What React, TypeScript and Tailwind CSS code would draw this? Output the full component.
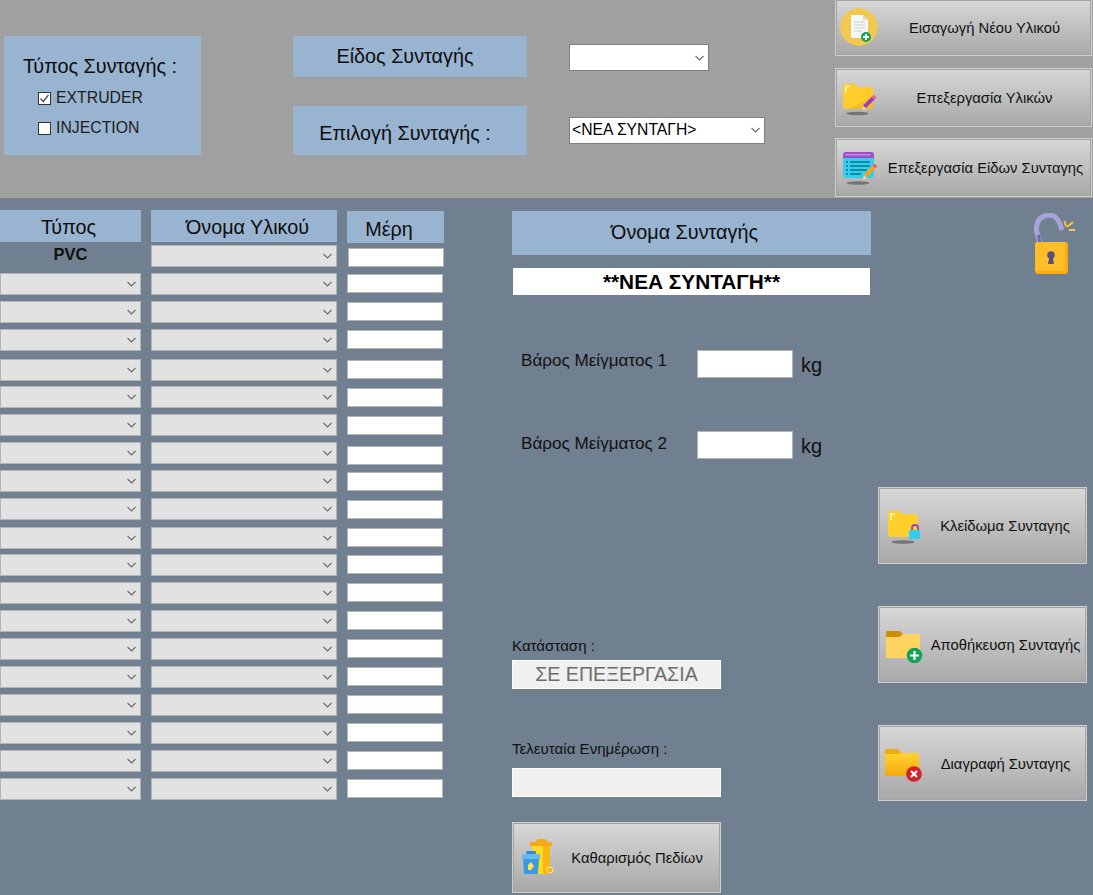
import type { ReactNode } from 'react'

const comboGaps = [
  'mt-[6px]', 'mt-[6px]', 'mt-[6px]', 'mt-[8px]', 'mt-[5px]', 'mt-[6px]', 'mt-[6px]', 'mt-[6px]', 'mt-[6px]', 'mt-[7px]',
  'mt-[5px]', 'mt-[6px]', 'mt-[6px]', 'mt-[6px]', 'mt-[6px]', 'mt-[6px]', 'mt-[6px]', 'mt-[6px]', 'mt-[6px]',
]

const partGaps = [
  'mt-[7px]', 'mt-[9px]', 'mt-[9px]', 'mt-[11px]', 'mt-[9px]', 'mt-[9px]', 'mt-[11px]', 'mt-[7px]', 'mt-[9px]', 'mt-[9px]',
  'mt-[8px]', 'mt-[9px]', 'mt-[9px]', 'mt-[9px]', 'mt-[9px]', 'mt-[9px]', 'mt-[9px]', 'mt-[9px]', 'mt-[9px]',
]

function Chevron() {
  return (
    <svg width="9" height="6" viewBox="0 0 9 6" fill="none" className="shrink-0">
      <path d="M0.5 1 L4.5 5 L8.5 1" stroke="#6b6b6b" strokeWidth="1.1" />
    </svg>
  )
}

function Combo({ className = '' }: { className?: string }) {
  return (
    <div className={`h-[22px] flex items-center justify-end pr-[4px] bg-[#e2e2e2] border border-[#b4b4b4] ${className}`}>
      <Chevron />
    </div>
  )
}

function PartInput({ className = '' }: { className?: string }) {
  return <div className={`h-[19px] w-[96px] bg-white border border-[#b4b4b4] ${className}`} />
}

function Caption({ className = '', children }: { className?: string; children: ReactNode }) {
  return (
    <div className={`flex items-center justify-center bg-[#99b4d1] text-[19.8px] text-[#0c0c0c] whitespace-nowrap ${className}`}>
      {children}
    </div>
  )
}

function Check({ checked, label }: { checked?: boolean; label: string }) {
  return (
    <div className="flex items-center h-[20px]">
      <div className="w-[13px] h-[13px] bg-white border border-[#333] flex items-center justify-center">
        {checked && (
          <svg width="11" height="11" viewBox="0 0 11 11" fill="none">
            <path d="M1.5 5.5 L4.2 8.5 L9.5 2" stroke="#444" strokeWidth="1.2" />
          </svg>
        )}
      </div>
      <span className="ml-[5px] text-[15.8px] text-[#1c1c1c]">{label}</span>
    </div>
  )
}

function ActionButton({
  icon,
  iconBox,
  label,
  className = '',
}: {
  icon: ReactNode
  iconBox: string
  label: string
  className?: string
}) {
  return (
    <div
      className={`flex items-center border border-[#cfcfcf] bg-linear-to-b from-[#d8d8d8] to-[#a8a8a8] shadow-[inset_0_0_0_1px_#a2a2a2] text-[14.8px] text-[#111] ${className}`}
    >
      <div className={`shrink-0 flex ${iconBox}`}>{icon}</div>
      <div className="flex-1 text-center whitespace-nowrap pt-[2px]">{label}</div>
    </div>
  )
}

function DocAddIcon() {
  return (
    <svg width="38" height="38" viewBox="0 0 38 38">
      <circle cx="19" cy="19" r="18.7" fill="#f2c94c" />
      <path d="M11 7 H23 L28 12 V30 H11 Z" fill="#f7f7f7" />
      <path d="M23 7 L28 12 H23 Z" fill="#d9d9d9" />
      <path d="M14 14 H25 M14 17 H25 M14 20 H25 M14 23 H22" stroke="#cfcfcf" strokeWidth="1" />
      <circle cx="26" cy="29" r="5" fill="#17a05d" />
      <path d="M26 26 V32 M23 29 H29" stroke="#fff" strokeWidth="1.8" />
    </svg>
  )
}

function Shadow({ cx = 15, cy = 31 }: { cx?: number; cy?: number }) {
  return <ellipse cx={cx} cy={cy} rx="11.5" ry="1.8" fill="#757575" />
}

function Pencil({ color }: { color: string }) {
  return (
    <g>
      <path d="M22 24 L31 15" stroke={color} strokeWidth="4" />
      <path d="M31 15 L33 13" stroke="#ef5d7a" strokeWidth="4" />
      <path d="M20 27.5 L20.6 23 L24 26.2 Z" fill="#f6d6a8" />
    </g>
  )
}

function FolderPencilIcon() {
  return (
    <svg width="36" height="34" viewBox="0 0 36 34">
      <Shadow />
      <path d="M0 3 Q0 0 3 0 H12 L15 4 H28 Q31 4 31 7 V23 Q31 26 28 26 H3 Q0 26 0 23 Z" fill="#ffcc29" />
      <path d="M2 2 H8 V4 H4 V9 H2 Z" fill="#fff0b0" />
      <path d="M6 26 H28 Q31 26 31 23 V14 Z" fill="#e9b41e" opacity="0.6" />
      <Pencil color="#9b3fc0" />
    </svg>
  )
}

function ListPencilIcon() {
  return (
    <svg width="36" height="34" viewBox="0 0 36 34">
      <Shadow />
      <path d="M0 10 V3 Q0 0 3 0 H28 Q31 0 31 3 V10 Z" fill="#9d4fc8" />
      <path d="M2 2 H28 V3.5 H2 Z" fill="#c78be0" />
      <path d="M0 6 H31 V23 Q31 26 28 26 H3 Q0 26 0 23 Z" fill="#35cdee" />
      <path d="M7 10 H27 M7 14 H27 M7 18 H24 M7 22 H18" stroke="#128aa8" strokeWidth="2" />
      <path d="M3 10 H5 M3 14 H5 M3 18 H5 M3 22 H5" stroke="#128aa8" strokeWidth="2" />
      <Pencil color="#f6a21e" />
    </svg>
  )
}

function FolderLockIcon() {
  return (
    <svg width="34" height="34" viewBox="0 0 34 34">
      <Shadow cx={15} cy={31} />
      <path d="M0 3 Q0 0 3 0 H11 L14 3 H27 Q30 3 30 6 V24 Q30 26 28 26 H3 Q0 26 0 23 Z" fill="#ffcf2b" />
      <path d="M2 2 H7 V4 H4 V9 H2 Z" fill="#fff0b0" />
      <path d="M24 20 V17 Q24 14 27 14 Q30 14 30 17 V20" fill="none" stroke="#9b3fc0" strokeWidth="1.8" />
      <rect x="21" y="19" width="11" height="9" rx="1" fill="#35cdee" />
    </svg>
  )
}

function FolderAddIcon() {
  return (
    <svg width="38" height="32" viewBox="0 0 38 32">
      <path d="M0 1 Q0 0 1 0 H14 L17 3 L14 7 H0 Z" fill="#c98f08" />
      <path d="M0 6 H13 L17 3 H34 V27 H0 Z" fill="#ffd35f" />
      <circle cx="28.5" cy="24.5" r="7.8" fill="#15a05a" />
      <path d="M28.5 20 V29 M24 24.5 H33" stroke="#fff" strokeWidth="2.2" />
    </svg>
  )
}

function FolderDeleteIcon() {
  return (
    <svg width="38" height="33" viewBox="0 0 38 33">
      <defs>
        <linearGradient id="folderRed" x1="0" y1="0" x2="0" y2="1">
          <stop offset="0" stopColor="#ffd42e" />
          <stop offset="1" stopColor="#f7a70f" />
        </linearGradient>
      </defs>
      <path d="M0 1 Q0 0 1 0 H13 L16 4 L13 6 H0 Z" fill="#eeaa10" />
      <path d="M0 5 H13 L16 4 H34 V27 H0 Z" fill="url(#folderRed)" />
      <circle cx="29" cy="25" r="7.8" fill="#d4202a" />
      <path d="M26 22 L32 28 M32 22 L26 28" stroke="#fff" strokeWidth="2.2" />
    </svg>
  )
}

function BinsIcon() {
  return (
    <svg width="32" height="38" viewBox="0 0 32 38">
      <path d="M14 3 Q14 0 17 0 H22 Q25 0 25 3 Z" fill="#f5a81c" />
      <path d="M8 3 H30 V7 H8 Z" fill="#f5a81c" />
      <path d="M10 7 H28 V35 H12 Z" fill="#ffdc1e" />
      <path d="M21 7 H28 V35 H21 Z" fill="#f8b514" />
      <circle cx="28" cy="31" r="3" fill="#f8b514" stroke="#fff3b0" strokeWidth="0.8" />
      <rect x="4" y="12" width="10" height="3" rx="1" fill="#2e8fd8" />
      <rect x="0" y="15" width="18" height="5" fill="#69b8ee" />
      <path d="M1 20 H17 L16 35 H2 Z" fill="#3a9be2" />
      <path d="M6 26 L9 23 L12 27 L9 31 H6 Z" fill="#ffe04a" />
    </svg>
  )
}

function LockIcon() {
  return (
    <svg width="43" height="62" viewBox="0 0 43 62">
      <path d="M7 30 L3.5 18 Q2.5 3 17 2 Q25 2 29 17" fill="none" stroke="#a7a3d8" strokeWidth="5" />
      <path d="M7 30 L5.5 22" stroke="#6e6a9e" strokeWidth="3" />
      <rect x="2" y="29" width="33" height="32" rx="3" fill="#ffa80f" />
      <path d="M2 32 Q2 29 5 29 H32 V58 H5 Q2 58 2 55 Z" fill="#ffbe2a" />
      <circle cx="18" cy="42" r="3.8" fill="#57507e" />
      <path d="M16.5 43 H19.5 L21 51 H15 Z" fill="#57507e" />
      <path d="M31.5 8 L33 13.5 M40 9 L34 14 M36 17 L42 17" stroke="#ffc933" strokeWidth="1.8" />
    </svg>
  )
}

export default function App() {
  return (
    <div className="w-[1093px] h-[895px] overflow-hidden flex flex-col bg-[#708090] font-['Liberation_Sans',sans-serif] text-[#111]">
      <div className="h-[199px] shrink-0 flex bg-[#a0a0a0] border-b border-[#808080]">
        <div className="ml-[4px] mt-[36px] w-[197px] h-[119px] bg-[#99b4d1] pt-[19px] pl-[19px]">
          <div className="text-[19.8px] leading-[22px] text-[#0c0c0c] whitespace-nowrap">Τύπος Συνταγής :</div>
          <div className="ml-[15px] mt-[11px]">
            <Check checked label="EXTRUDER" />
            <div className="mt-[10px]">
              <Check label="INJECTION" />
            </div>
          </div>
        </div>

        <div className="ml-[92px] mt-[36px] w-[234px]">
          <Caption className="h-[41px] pr-[10px]">Είδος Συνταγής</Caption>
          <Caption className="mt-[29px] h-[49px] pr-[10px] pt-[6px]">Επιλογή Συνταγής :</Caption>
        </div>

        <div className="ml-[42px] mt-[44px] w-[196px]">
          <div className="w-[140px] h-[27px] bg-white border border-[#808080] flex items-center justify-end pr-[4px]">
            <Chevron />
          </div>
          <div className="mt-[46px] h-[27px] bg-white border border-[#808080] flex items-center justify-between pl-[2px] pr-[4px] pb-[1px] text-[15.7px] text-black">
            <span>&lt;ΝΕΑ ΣΥΝΤΑΓΗ&gt;</span>
            <Chevron />
          </div>
        </div>

        <div className="ml-[70px] w-[257px] -mt-px">
          <ActionButton
            className="h-[57px] w-full"
            iconBox="w-[42px] pl-[4px] pb-[2px]"
            icon={<DocAddIcon />}
            label="Εισαγωγή Νέου Υλικού"
          />
          <ActionButton
            className="mt-[12px] h-[59px] w-full"
            iconBox="w-[42px] pl-[7px] pt-[5px]"
            icon={<FolderPencilIcon />}
            label="Επεξεργασία Υλικών"
          />
          <ActionButton
            className="mt-[11px] h-[59px] w-full"
            iconBox="w-[44px] pl-[7px] pt-[2px]"
            icon={<ListPencilIcon />}
            label="Επεξεργασία Είδων Συνταγης"
          />
        </div>
      </div>

      <div className="flex-1 flex">
        <div className="w-[141px] mt-[11px] shrink-0">
          <Caption className="h-[32px] pr-[4px] pt-[4px]">Τύπος</Caption>
          <div className="h-[31px] text-center font-bold text-[16.5px] leading-[25px] text-[#111]">PVC</div>
          <Combo />
          {comboGaps.slice(1).map((gap, i) => (
            <Combo key={i} className={gap} />
          ))}
        </div>

        <div className="w-[186px] ml-[10px] mt-[11px] shrink-0">
          <Caption className="h-[32px] pl-[7px] pt-[4px]">Όνομα Υλικού</Caption>
          <Combo className="mt-[3px]" />
          {comboGaps.map((gap, i) => (
            <Combo key={i} className={gap} />
          ))}
        </div>

        <div className="w-[97px] ml-[10px] mt-[12px] shrink-0">
          <Caption className="h-[32px] pr-[13px] pt-[6px]">Μέρη</Caption>
          <PartInput className="mt-[5px] ml-px" />
          {partGaps.map((gap, i) => (
            <PartInput key={i} className={gap} />
          ))}
        </div>

        <div className="w-[359px] ml-[68px] shrink-0 text-[17.1px]">
          <Caption className="mt-[12px] h-[44px] pr-[14px]">Όνομα Συνταγής</Caption>
          <div className="mt-[13px] mx-px h-[27px] bg-white flex items-center justify-center font-bold text-[20.8px] text-black">
            **ΝΕΑ ΣΥΝΤΑΓΗ**
          </div>

          <div className="mt-[55px] flex items-start">
            <div className="w-[185px] pl-[9px] leading-[20px] pt-[1px] whitespace-nowrap">Βάρος Μείγματος 1</div>
            <div className="w-[96px] h-[28px] bg-white border border-[#b4b4b4]" />
            <div className="ml-[8px] text-[20px] leading-[30px]">kg</div>
          </div>
          <div className="mt-[53px] -translate-y-[2px] flex items-start">
            <div className="w-[185px] pl-[9px] leading-[24px] pt-[1px] whitespace-nowrap">Βάρος Μείγματος 2</div>
            <div className="w-[96px] h-[28px] bg-white border border-[#b4b4b4]" />
            <div className="ml-[8px] text-[20px] leading-[30px]">kg</div>
          </div>

          <div className="mt-[174px] h-[17px] text-[15.1px] leading-[17px]">Κατάσταση :</div>
          <div className="mt-[6px] w-[209px] h-[29px] bg-[#f0f0f0] border border-white flex items-center justify-center text-[19.6px] text-[#6d6d6d]">
            ΣΕ ΕΠΕΞΕΡΓΑΣΙΑ
          </div>
          <div className="mt-[51px] h-[17px] text-[15.1px] leading-[17px]">Τελευταία Ενημέρωση :</div>
          <div className="mt-[11px] w-[209px] h-[29px] bg-[#f0f0f0] border border-white" />
          <ActionButton
            className="mt-[25px] h-[71px] w-[209px]"
            iconBox="w-[41px] pl-[9px] pt-[1px]"
            icon={<BinsIcon />}
            label="Καθαρισμός Πεδίων"
          />
        </div>

        <div className="w-[209px] ml-[7px] shrink-0">
          <div className="ml-[155px] mt-[14px] h-[62px]">
            <LockIcon />
          </div>
          <ActionButton
            className="mt-[212px] h-[77px]"
            iconBox="w-[45px] pl-[9px] pt-[5px]"
            icon={<FolderLockIcon />}
            label="Κλείδωμα Συνταγης"
          />
          <ActionButton
            className="mt-[42px] h-[77px]"
            iconBox="w-[46px] pl-[7px] pt-[5px]"
            icon={<FolderAddIcon />}
            label="Αποθήκευση Συνταγής"
          />
          <ActionButton
            className="mt-[42px] h-[76px]"
            iconBox="w-[46px] pl-[6px] pt-[5px]"
            icon={<FolderDeleteIcon />}
            label="Διαγραφή Συνταγης"
          />
        </div>
      </div>
    </div>
  )
}
